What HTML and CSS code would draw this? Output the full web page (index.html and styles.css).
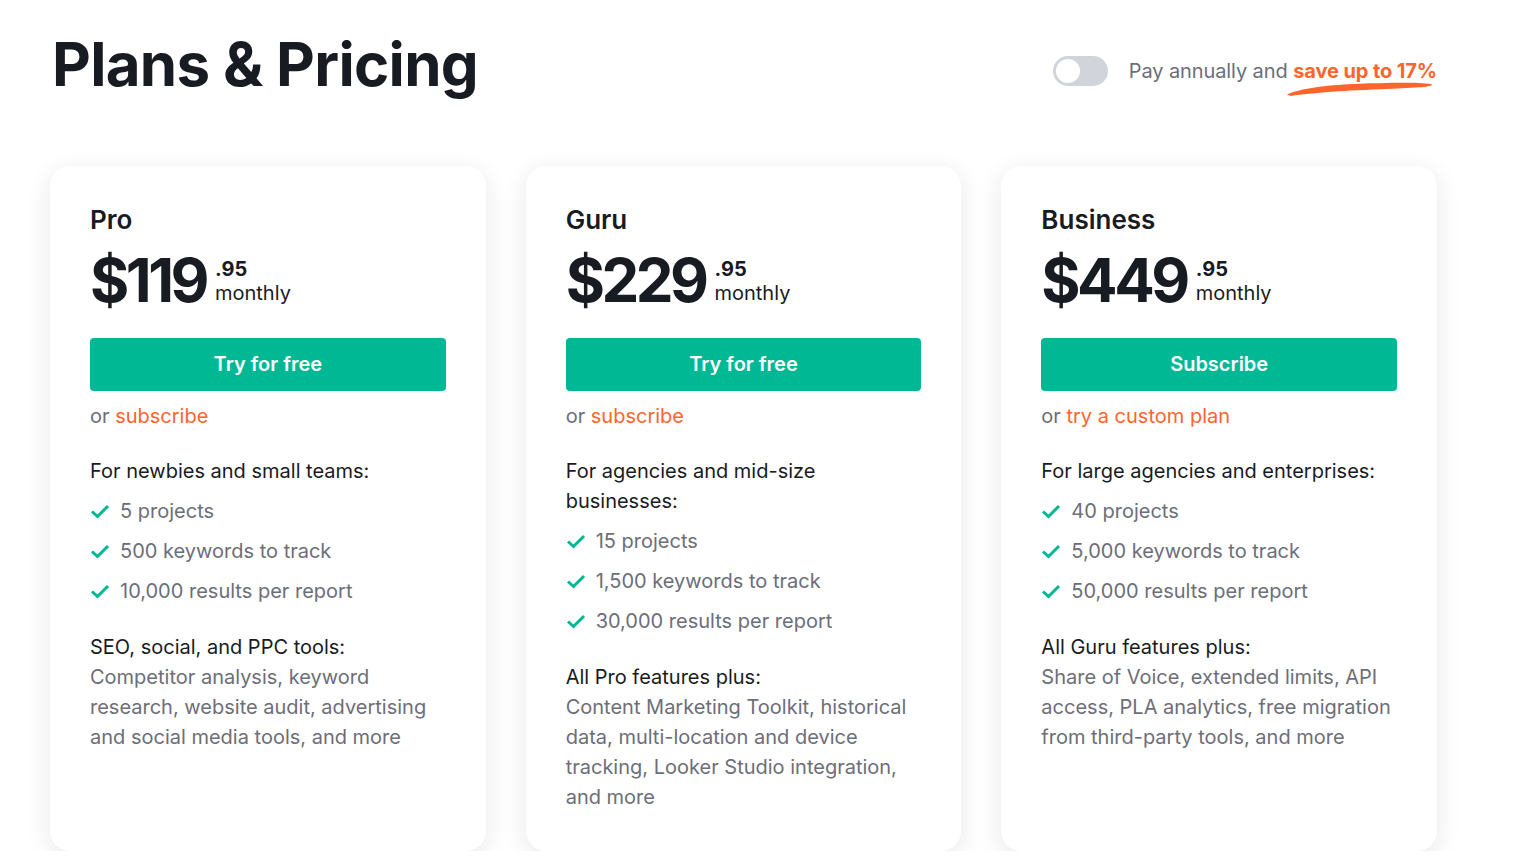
FILE: index.html
```html
<!DOCTYPE html>
<html lang="en">
<head>
    <meta charset="UTF-8">
    <meta name="viewport" content="width=device-width, initial-scale=1.0">
    <title>Plans &amp; Pricing</title>
    <link rel="stylesheet" href="styles.css">
</head>
<body>
    <main class="pricing">
        <header class="pricing-head">
            <h1>Plans &amp; Pricing</h1>
            <div class="billing">
                <span class="switch"><span class="knob"></span></span>
                <span class="billing-text">Pay annually and
                    <span class="save">save up to 17%
                        <svg class="brush" width="146" height="14" viewBox="0 0 146 14">
                            <path d="M0 12.5 C 15 5.5, 50 1.5, 100 1 C 125 0.5, 140 1, 145 2.5 C 146 5, 130 5.5, 100 7 C 60 8.5, 25 10.5, 4 14 Z" fill="#ff642d"/>
                        </svg>
                    </span>
                </span>
            </div>
        </header>

        <section class="plans">
            <article class="plan">
                <h2>Pro</h2>
                <div class="price">
                    <span class="amount">$119</span>
                    <span class="cents"><b>.95</b>monthly</span>
                </div>
                <a class="btn" href="#">Try for free</a>
                <p class="alt">or <a href="#">subscribe</a></p>
                <p class="lead">For newbies and small teams:</p>
                <ul class="features">
                    <li><svg viewBox="0 0 20 20"><path d="M2 10.5l5.5 5L18 5"/></svg>5 projects</li>
                    <li><svg viewBox="0 0 20 20"><path d="M2 10.5l5.5 5L18 5"/></svg>500 keywords to track</li>
                    <li><svg viewBox="0 0 20 20"><path d="M2 10.5l5.5 5L18 5"/></svg>10,000 results per report</li>
                </ul>
                <p class="lead">SEO, social, and PPC tools:</p>
                <p class="desc">Competitor analysis, keyword research, website audit, advertising and social media tools, and more</p>
            </article>

            <article class="plan">
                <h2>Guru</h2>
                <div class="price">
                    <span class="amount">$229</span>
                    <span class="cents"><b>.95</b>monthly</span>
                </div>
                <a class="btn" href="#">Try for free</a>
                <p class="alt">or <a href="#">subscribe</a></p>
                <p class="lead">For agencies and mid-size businesses:</p>
                <ul class="features">
                    <li><svg viewBox="0 0 20 20"><path d="M2 10.5l5.5 5L18 5"/></svg>15 projects</li>
                    <li><svg viewBox="0 0 20 20"><path d="M2 10.5l5.5 5L18 5"/></svg>1,500 keywords to track</li>
                    <li><svg viewBox="0 0 20 20"><path d="M2 10.5l5.5 5L18 5"/></svg>30,000 results per report</li>
                </ul>
                <p class="lead">All Pro features plus:</p>
                <p class="desc">Content Marketing Toolkit, historical data, multi-location and device tracking, Looker Studio integration, and more</p>
            </article>

            <article class="plan">
                <h2>Business</h2>
                <div class="price">
                    <span class="amount">$449</span>
                    <span class="cents"><b>.95</b>monthly</span>
                </div>
                <a class="btn" href="#">Subscribe</a>
                <p class="alt">or <a href="#">try a custom plan</a></p>
                <p class="lead">For large agencies and enterprises:</p>
                <ul class="features">
                    <li><svg viewBox="0 0 20 20"><path d="M2 10.5l5.5 5L18 5"/></svg>40 projects</li>
                    <li><svg viewBox="0 0 20 20"><path d="M2 10.5l5.5 5L18 5"/></svg>5,000 keywords to track</li>
                    <li><svg viewBox="0 0 20 20"><path d="M2 10.5l5.5 5L18 5"/></svg>50,000 results per report</li>
                </ul>
                <p class="lead">All Guru features plus:</p>
                <p class="desc">Share of Voice, extended limits, API access, PLA analytics, free migration from third-party tools, and more</p>
            </article>
        </section>
    </main>
</body>
</html>
```

FILE: styles.css
```css
/* Page */
body {
    margin: 0;
    background: #fff;
    font-family: Inter, "Noto Sans", Arial, sans-serif;
    color: #191b23;
}

.pricing {
    width: 1387px;
    padding: 28px 0 0 50px;
}

/* Header row */
.pricing-head {
    display: flex;
    align-items: flex-start;
    justify-content: space-between;
}

.pricing-head h1 {
    margin: 0 0 0 2px;
    font-size: 60px;
    line-height: 72px;
    font-weight: 700;
    letter-spacing: -0.7px;
}

.billing {
    display: flex;
    align-items: center;
    gap: 21px;
    margin-top: 28px;
}

.switch {
    width: 55px;
    height: 30px;
    border-radius: 15px;
    background: #d1d4db;
    display: flex;
    align-items: center;
    padding: 0 3px;
    box-sizing: border-box;
}

.knob {
    width: 24px;
    height: 24px;
    border-radius: 50%;
    background: #fff;
}

.billing-text {
    font-size: 20px;
    color: #6c6e79;
    letter-spacing: -0.1px;
}

.save {
    position: relative;
    color: #ff642d;
    font-weight: 700;
}

.brush {
    position: absolute;
    left: -6px;
    top: 23px;
}

/* Cards */
.plans {
    display: grid;
    grid-template-columns: repeat(3, 1fr);
    gap: 40px;
    margin-top: 66px;
}

.plan {
    background: #fff;
    border-radius: 20px;
    box-shadow: 0 6px 24px rgba(25, 27, 35, 0.10);
    padding: 36px 40px 40px;
    height: 685px;
    box-sizing: border-box;
}

.plan h2 {
    margin: 0;
    font-size: 26px;
    font-weight: 600;
    line-height: 36px;
}

.price {
    display: flex;
    align-items: flex-start;
    margin-top: 11px;
    height: 66px;
}

.amount {
    font-size: 60px;
    font-weight: 700;
    line-height: 62px;
    letter-spacing: -3.5px;
}

.cents {
    display: flex;
    flex-direction: column;
    margin: 8px 0 0 9px;
    font-size: 20px;
    line-height: 24px;
}

.cents b {
    font-weight: 700;
}

.btn {
    display: block;
    margin-top: 23px;
    height: 53px;
    line-height: 53px;
    border-radius: 4px;
    background: #00b894;
    color: #fff;
    text-align: center;
    font-size: 20px;
    font-weight: 600;
    text-decoration: none;
}

.alt {
    margin: 10px 0 0;
    font-size: 20px;
    line-height: 30px;
    color: #6c6e79;
}

.alt a {
    color: #ff642d;
    text-decoration: none;
}

.lead {
    margin: 25px 0 0;
    font-size: 20px;
    line-height: 30px;
    color: #191b23;
}

.features {
    list-style: none;
    margin: 5px 0 0;
    padding: 0;
}

.features li {
    display: flex;
    align-items: center;
    gap: 10px;
    height: 40px;
    font-size: 20px;
    color: #6c6e79;
}

.features svg {
    width: 20px;
    height: 20px;
    fill: none;
    stroke: #00b894;
    stroke-width: 3;
}

.features + .lead {
    margin-top: 21px;
}

.desc {
    margin: 0;
    font-size: 20px;
    line-height: 30px;
    color: #6c6e79;
}
```
